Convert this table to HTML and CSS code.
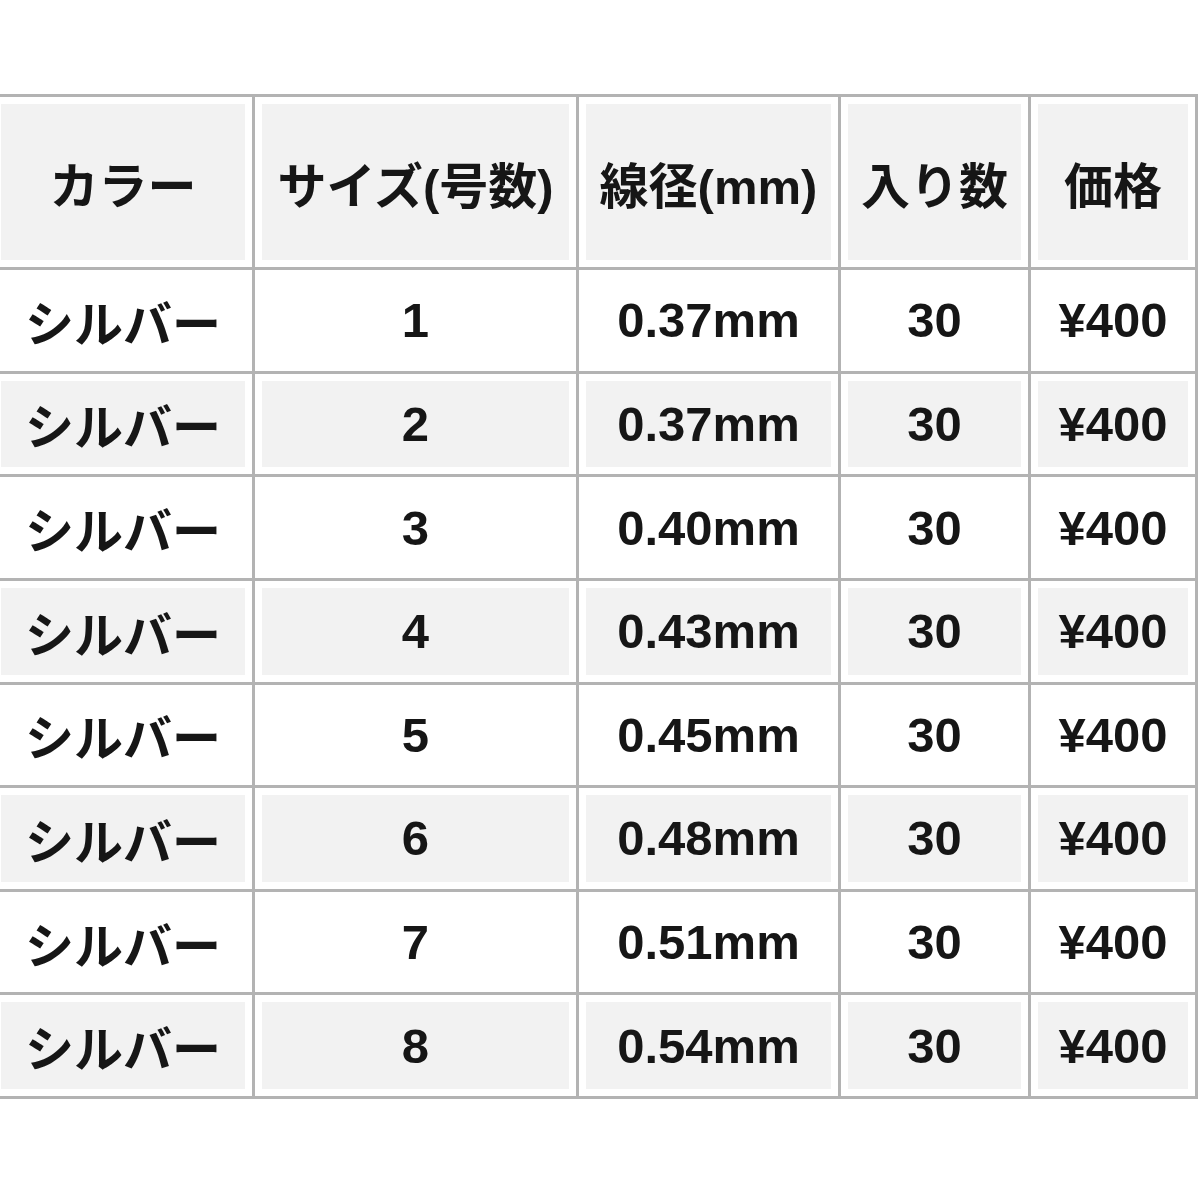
FILE: index.html
```html
<!DOCTYPE html>
<html lang="ja">
<head>
<meta charset="utf-8">
<title>サイズ表</title>
<link rel="stylesheet" href="styles.css">
</head>
<body>
<table class="spec">
  <colgroup>
    <col class="c1"><col class="c2"><col class="c3"><col class="c4"><col class="c5">
  </colgroup>
  <thead>
    <tr><th>カラー</th><th>サイズ(号数)</th><th>線径(mm)</th><th>入り数</th><th>価格</th></tr>
  </thead>
  <tbody>
    <tr><td>シルバー</td><td>1</td><td>0.37mm</td><td>30</td><td>¥400</td></tr>
    <tr><td>シルバー</td><td>2</td><td>0.37mm</td><td>30</td><td>¥400</td></tr>
    <tr><td>シルバー</td><td>3</td><td>0.40mm</td><td>30</td><td>¥400</td></tr>
    <tr><td>シルバー</td><td>4</td><td>0.43mm</td><td>30</td><td>¥400</td></tr>
    <tr><td>シルバー</td><td>5</td><td>0.45mm</td><td>30</td><td>¥400</td></tr>
    <tr><td>シルバー</td><td>6</td><td>0.48mm</td><td>30</td><td>¥400</td></tr>
    <tr><td>シルバー</td><td>7</td><td>0.51mm</td><td>30</td><td>¥400</td></tr>
    <tr><td>シルバー</td><td>8</td><td>0.54mm</td><td>30</td><td>¥400</td></tr>
  </tbody>
</table>
</body>
</html>
```

FILE: styles.css
```css
html, body {
  margin: 0;
  padding: 0;
  background: #ffffff;
  overflow: hidden;
}

.spec {
  margin: 94px 0 0 -9px;
  width: 1207px;
  table-layout: fixed;
  border-collapse: separate;
  border-spacing: 0;
  border-top: 3px solid #b3b3b3;
  border-left: 3px solid #b3b3b3;
  font-family: "Liberation Sans", "Noto Sans CJK JP", sans-serif;
  font-weight: 700;
  font-size: 49px;
  color: #161616;
}

.c1 { width: 261px; }
.c2 { width: 324px; }
.c3 { width: 262px; }
.c4 { width: 190px; }
.c5 { width: 167px; }

.spec th,
.spec td {
  box-sizing: border-box;
  padding: 0;
  text-align: center;
  vertical-align: middle;
  white-space: nowrap;
  border-right: 3px solid #b3b3b3;
  border-bottom: 3px solid #b3b3b3;
  box-shadow: inset 0 0 0 7px #ffffff;
  background: #ffffff;
}

.spec th {
  height: 173px;
  font-weight: 700;
  background: #f2f2f2;
}

.spec td {
  height: 103.625px;
}

.spec tbody tr:nth-child(even) td {
  background: #f2f2f2;
}
```
